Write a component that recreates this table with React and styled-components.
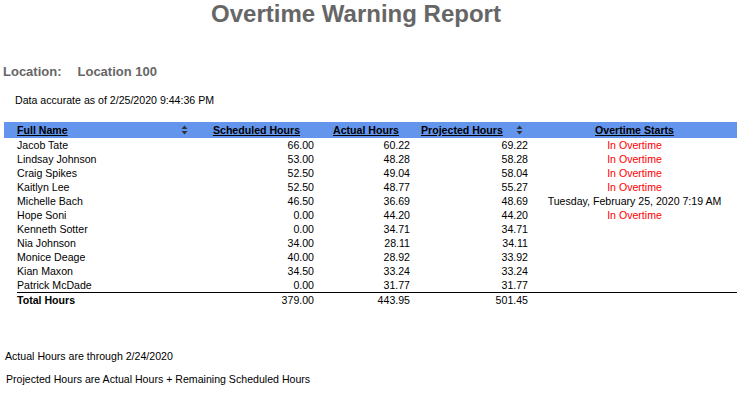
import React from 'react';
import styled, { createGlobalStyle } from 'styled-components';

const GlobalStyle = createGlobalStyle`
  body {
    margin: 0;
    background: #fff;
    font-family: "Liberation Sans", Arial, sans-serif;
    color: #000;
  }
`;

const Page = styled.div`
  width: 752px;
  height: 395px;
  overflow: hidden;
`;

const Title = styled.h1`
  margin: 0;
  text-align: center;
  font-size: 24px;
  line-height: 28px;
  font-weight: 700;
  color: #666;
  padding-right: 40px;
`;

const Location = styled.div`
  margin-top: 36px;
  padding-left: 3px;
  font-size: 13px;
  line-height: 16px;
  font-weight: 700;
  color: #666;
  display: flex;
  gap: 16px;
`;

const Note = styled.div`
  margin-top: ${({top}) => top}px;
  padding-left: ${({left}) => left}px;
  font-size: 10.6px;
  line-height: 14px;
`;

const Table = styled.table`
  margin: 15px 0 0 4px;
  width: 733px;
  border-collapse: collapse;
  table-layout: fixed;
  font-size: 10.6px;
`;

const HeadRow = styled.tr`
  background: #6495ed;
  height: 16px;
`;

const Th = styled.th`
  padding: 0;
  font-weight: 700;
  text-align: ${({align}) => align || 'center'};
  padding-left: ${({pl}) => pl || 0}px;
  line-height: 16px;
  white-space: nowrap;
`;

const HeadLabel = styled.span`
  text-decoration: underline;
`;

const Sort = styled.svg`
  float: right;
  margin-top: 3px;
  margin-right: ${({right}) => right}px;
`;

const Row = styled.tr`
  height: 14px;
`;

const TotalRow = styled.tr`
  height: 14px;
  td:not(:first-child) {
    border-top: 1px solid #000;
  }
`;

const Td = styled.td`
  padding: 0;
  line-height: 14px;
  white-space: nowrap;
  text-align: ${({align}) => align || 'left'};
  padding-right: ${({pr}) => pr || 0}px;
  font-weight: ${({bold}) => (bold ? 700 : 400)};
  color: ${({red}) => (red ? '#ff0000' : 'inherit')};
`;

const SortIcon = ({ right }) => (
  <Sort right={right} width="7" height="10" viewBox="0 0 7 10">
    <path d="M3.5 0.5 L6.5 4 L0.5 4 Z" fill="#333" />
    <path d="M3.5 9.5 L6.5 6 L0.5 6 Z" fill="#333" />
  </Sort>
);

const rows = [
  ['Jacob Tate', '66.00', '60.22', '69.22', 'In Overtime'],
  ['Lindsay Johnson', '53.00', '48.28', '58.28', 'In Overtime'],
  ['Craig Spikes', '52.50', '49.04', '58.04', 'In Overtime'],
  ['Kaitlyn Lee', '52.50', '48.77', '55.27', 'In Overtime'],
  ['Michelle Bach', '46.50', '36.69', '48.69', 'Tuesday, February 25, 2020 7:19 AM'],
  ['Hope Soni', '0.00', '44.20', '44.20', 'In Overtime'],
  ['Kenneth Sotter', '0.00', '34.71', '34.71', ''],
  ['Nia Johnson', '34.00', '28.11', '34.11', ''],
  ['Monice Deage', '40.00', '28.92', '33.92', ''],
  ['Kian Maxon', '34.50', '33.24', '33.24', ''],
  ['Patrick McDade', '0.00', '31.77', '31.77', ''],
];

export default function App() {
  return (
    <Page>
      <GlobalStyle />
      <Title>Overtime Warning Report</Title>
      <Location>
        <span>Location:</span>
        <span>Location 100</span>
      </Location>
      <Note top={13} left={15}>Data accurate as of 2/25/2020 9:44:36 PM</Note>
      <Table>
        <colgroup>
          <col style={{ width: 13 }} />
          <col style={{ width: 178 }} />
          <col style={{ width: 123 }} />
          <col style={{ width: 96 }} />
          <col style={{ width: 118 }} />
          <col style={{ width: 205 }} />
        </colgroup>
        <thead>
          <HeadRow>
            <Th />
            <Th align="left">
              <SortIcon right={7} />
              <HeadLabel>Full Name</HeadLabel>
            </Th>
            <Th><HeadLabel>Scheduled Hours</HeadLabel></Th>
            <Th><HeadLabel>Actual Hours</HeadLabel></Th>
            <Th align="left" pl={7}>
              <SortIcon right={9} />
              <HeadLabel>Projected Hours</HeadLabel>
            </Th>
            <Th><HeadLabel>Overtime Starts</HeadLabel></Th>
          </HeadRow>
        </thead>
        <tbody>
          {rows.map(r => (
            <Row key={r[0]}>
              <Td />
              <Td>{r[0]}</Td>
              <Td align="right" pr={4}>{r[1]}</Td>
              <Td align="right" pr={4}>{r[2]}</Td>
              <Td align="right" pr={4}>{r[3]}</Td>
              <Td align="center" red={r[4] === 'In Overtime'}>{r[4]}</Td>
            </Row>
          ))}
          <TotalRow>
            <Td />
            <Td bold>Total Hours</Td>
            <Td align="right" pr={4}>379.00</Td>
            <Td align="right" pr={4}>443.95</Td>
            <Td align="right" pr={4}>501.45</Td>
            <Td />
          </TotalRow>
        </tbody>
      </Table>
      <Note top={42} left={5}>Actual Hours are through 2/24/2020</Note>
      <Note top={9} left={6}>Projected Hours are Actual Hours + Remaining Scheduled Hours</Note>
    </Page>
  );
}
